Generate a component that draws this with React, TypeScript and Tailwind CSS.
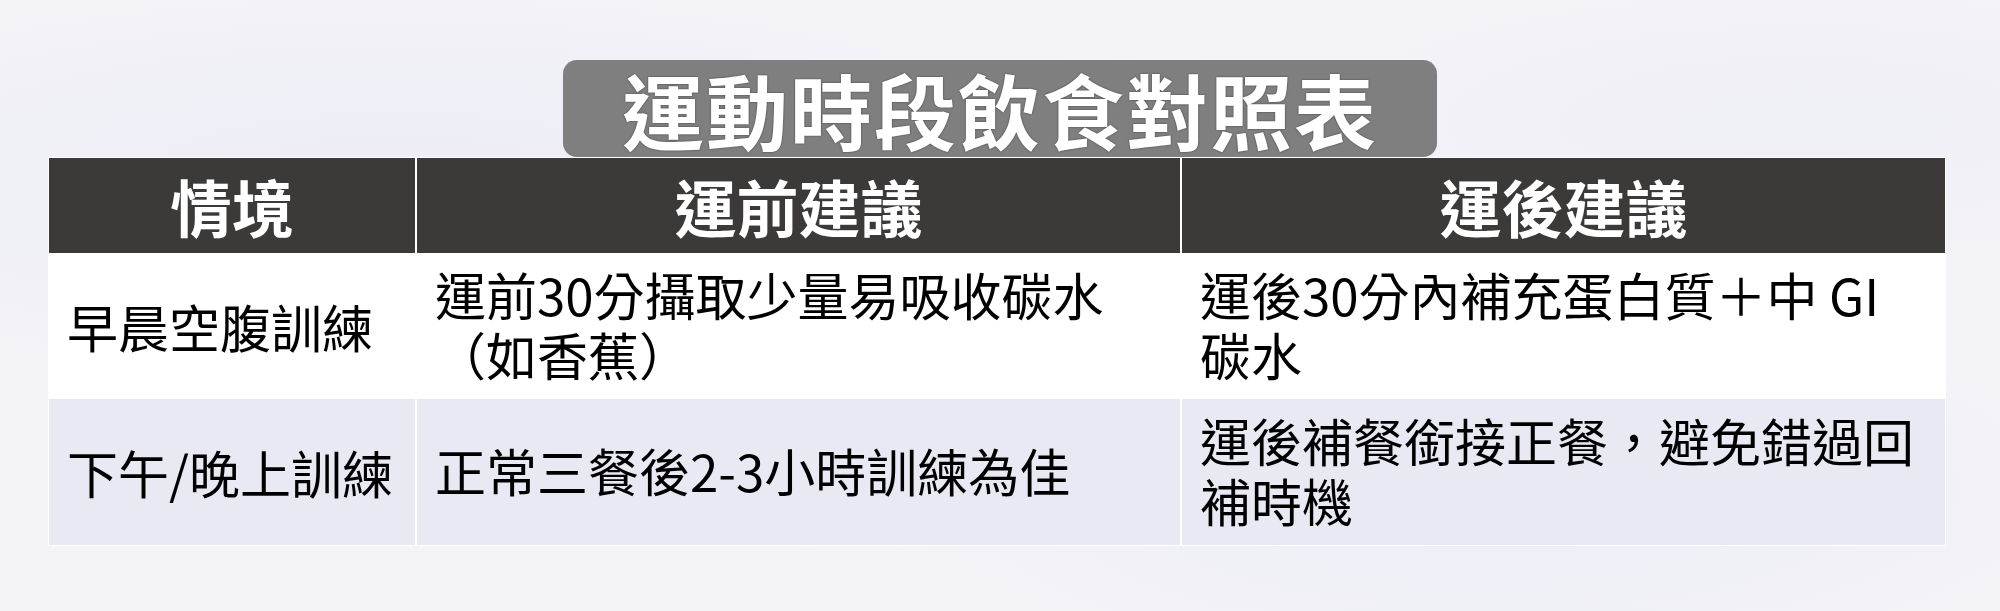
import React from "react";

const rows = [
  {
    scene: "早晨空腹訓練",
    before: "運前30分攝取少量易吸收碳水（如香蕉）",
    after: "運後30分內補充蛋白質＋中 GI 碳水",
    bg: "bg-white",
    h: "h-[142px]",
  },
  {
    scene: "下午/晚上訓練",
    before: "正常三餐後2-3小時訓練為佳",
    after: "運後補餐銜接正餐，避免錯過回補時機",
    bg: "bg-[#e9e9f3]",
    h: "h-[146px]",
  },
];

const headers = ["情境", "運前建議", "運後建議"];

export default function App() {
  return (
    <div className="min-h-[611px] w-[2000px] bg-[#f4f4f8] bg-[radial-gradient(ellipse_at_20%_30%,#ececf5_0%,transparent_40%),radial-gradient(ellipse_at_75%_80%,#ededf6_0%,transparent_35%),radial-gradient(ellipse_at_90%_20%,#efeff6_0%,transparent_30%)] pt-[60px] font-['Noto_Sans_CJK_TC','Noto_Sans_CJK_SC',sans-serif]">
      <div className="mx-auto flex h-[97px] w-[874px] items-center justify-center rounded-[14px] bg-[#7f7f7f]">
        <h1 className="text-[82px] font-bold leading-none tracking-[2px] text-white [text-shadow:0_0_2px_#3a3a3a]">
          運動時段飲食對照表
        </h1>
      </div>

      <div className="ml-[48px] grid w-[1898px] grid-cols-[366px_763px_763px] gap-[2px] bg-white p-px">
        {headers.map((h) => (
          <div
            key={h}
            className="flex h-[95px] items-center justify-center bg-[#3b3a39] text-[62px] font-bold leading-none text-white"
          >
            {h}
          </div>
        ))}
        {rows.map((r) => (
          <React.Fragment key={r.scene}>
            <div
              className={`flex ${r.h} items-center whitespace-nowrap px-[18px] text-[51px] leading-[60px] text-black ${r.bg}`}
            >
              {r.scene}
            </div>
            <div
              className={`flex ${r.h} items-center px-[18px] pb-[4px] text-[51px] leading-[60px] text-black ${r.bg}`}
            >
              <p>{r.before}</p>
            </div>
            <div
              className={`flex ${r.h} items-center px-[18px] pb-[4px] text-[51px] leading-[60px] text-black ${r.bg}`}
            >
              <p>{r.after}</p>
            </div>
          </React.Fragment>
        ))}
      </div>
    </div>
  );
}
